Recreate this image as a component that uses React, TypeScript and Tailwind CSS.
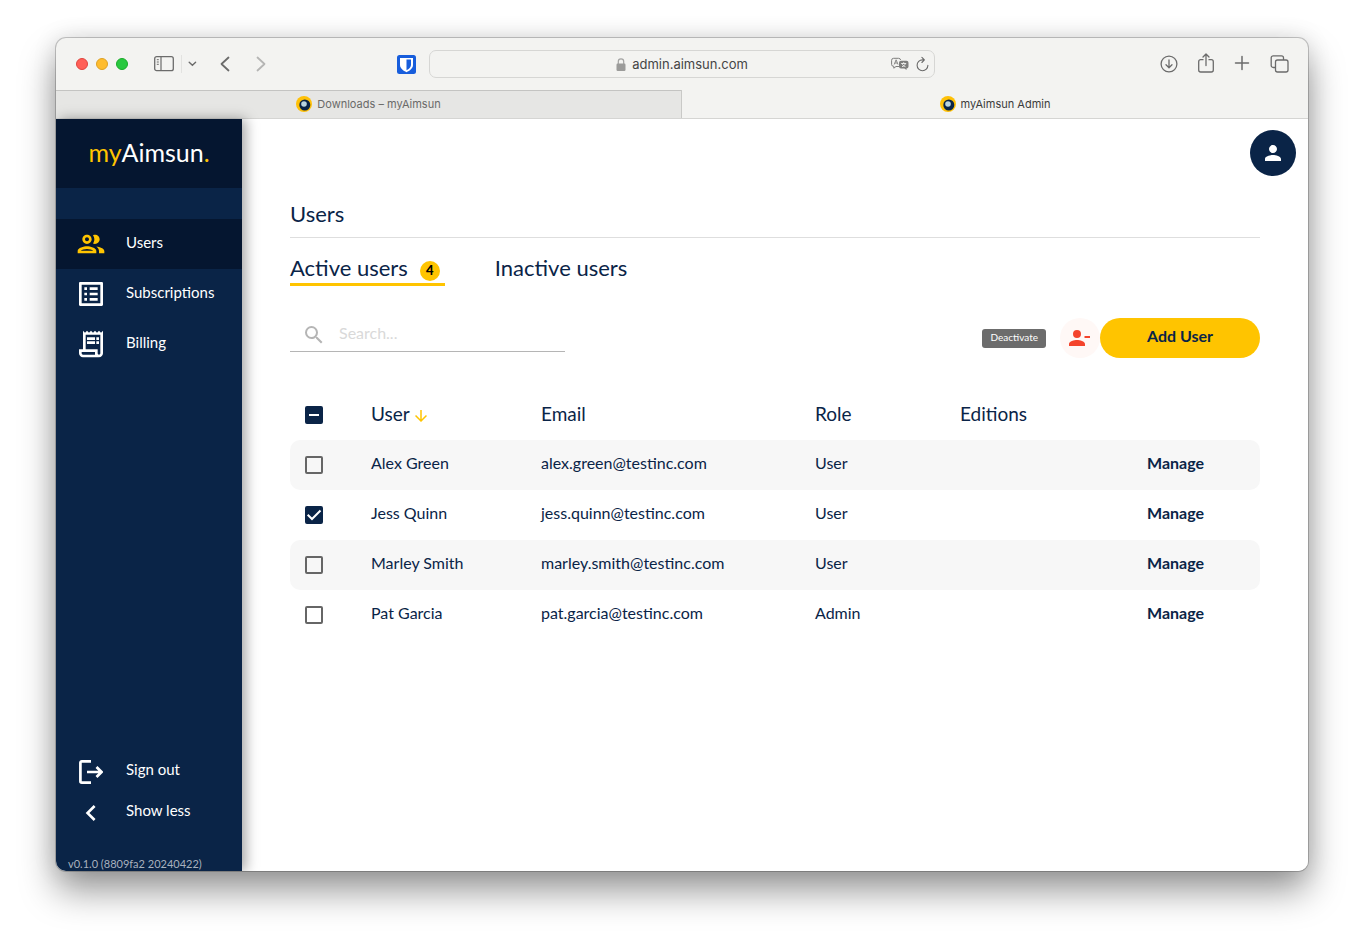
import { useEffect, useRef, useState } from 'react';
import {
  MdArrowDownward,
  MdChevronLeft,
  MdOutlineGroup,
  MdOutlineListAlt,
  MdOutlineReceiptLong,
  MdPerson,
  MdSearch
} from 'react-icons/md';

const navItems = [
  { icon: MdOutlineGroup, label: 'Users', active: true },
  { icon: MdOutlineListAlt, label: 'Subscriptions', active: false },
  { icon: MdOutlineReceiptLong, label: 'Billing', active: false }
];

const users = [
  { name: 'Alex Green', email: 'alex.green@testinc.com', role: 'User' },
  { name: 'Jess Quinn', email: 'jess.quinn@testinc.com', role: 'User' },
  { name: 'Marley Smith', email: 'marley.smith@testinc.com', role: 'User' },
  { name: 'Pat Garcia', email: 'pat.garcia@testinc.com', role: 'Admin' }
];

function Favicon() {
  return (
    <svg viewBox="0 0 16 16" className="size-4 shrink-0" aria-hidden="true">
      <circle cx="8" cy="8" r="8" fill="#ffc107" />
      <circle cx="8.8" cy="9" r="5.5" fill="#0a2447" />
      <circle cx="8" cy="8" r="2.800" fill="#b9d3de" />
    </svg>
  );
}

function Toolbar() {
  return (
    <div className="grid h-[52px] grid-cols-[1fr_506px_1fr] items-center text-[#6b6b6b]">
      <div className="flex items-center pr-[13px] pl-5">
        <div className="flex gap-2">
          <button aria-label="Close" className="size-3 rounded-full border border-[#e0443e] bg-[#ff5f57]" />
          <button aria-label="Minimize" className="size-3 rounded-full border border-[#dea123] bg-[#febc2e]" />
          <button aria-label="Zoom" className="size-3 rounded-full border border-[#1aab29] bg-[#28c840]" />
        </div>
        <button aria-label="Sidebar" className="ml-[26px]">
          <svg width="20" height="16" viewBox="0 0 20 16" fill="none" stroke="currentColor">
            <rect x="0.7" y="0.7" width="18.6" height="14" rx="2" strokeWidth="1.3" />
            <path d="M7 1v13.5" strokeWidth="1.2" />
            <path d="M2.8 3.7h2M2.8 6h2M2.8 8.300h2" strokeWidth="1" />
          </svg>
        </button>
        <span className="ml-[7px] h-[18px] w-px bg-[#e2e2e0]" />
        <button aria-label="Tab groups" className="ml-[6px]">
          <svg width="9" height="6" viewBox="0 0 9 6" fill="none" stroke="currentColor" strokeWidth="1.4" strokeLinecap="round">
            <path d="M1.200 1.200l3.200 3 3.200-3" />
          </svg>
        </button>
        <button aria-label="Back" className="ml-[23px]">
          <svg width="10" height="16" viewBox="0 0 10 16" fill="none" stroke="currentColor" strokeWidth="1.8" strokeLinecap="round" strokeLinejoin="round">
            <path d="M8.500 1.500L1.500 8l7 6.500" />
          </svg>
        </button>
        <button aria-label="Forward" className="ml-[26px] text-[#b5b5b4]">
          <svg width="10" height="16" viewBox="0 0 10 16" fill="none" stroke="currentColor" strokeWidth="1.8" strokeLinecap="round" strokeLinejoin="round">
            <path d="M1.500 1.500l7 6.500-7 6.500" />
          </svg>
        </button>
        <button aria-label="Bitwarden" className="ml-auto">
          <svg width="19" height="19" viewBox="0 0 19 19">
            <rect width="19" height="19" rx="2.500" fill="#175ddc" />
            <path d="M3 3h13v7c0 3.300-3.300 5.700-6.500 7.200C6.300 15.700 3 13.300 3 10z" fill="#fff" />
            <path d="M9.500 4.600H14V10c0 2.200-2 4-4.500 5.300z" fill="#175ddc" />
          </svg>
        </button>
      </div>

      <div className="flex h-7 items-center rounded-[7px] border border-[#d6d6d4] px-[5px]">
        <div className="w-[38px]" />
        <div className="flex flex-1 items-center justify-center gap-[6px]">
          <svg width="10" height="13" viewBox="0 0 10 13">
            <path d="M2.300 6V3.500a2.700 2.700 0 015.400 0V6" fill="none" stroke="#a3a3a2" strokeWidth="1.2" />
            <rect x="0.500" y="5.500" width="9" height="7.500" rx="1.200" fill="#9b9b9a" />
          </svg>
          <span className="text-[13px] leading-5 text-[#454545]">admin.aimsun.com</span>
        </div>
        <div className="flex w-[38px] items-center gap-[7px]">
          <button aria-label="Translate" className="text-[#7d7d7c]">
            <svg width="18" height="14" viewBox="0 0 18 14" fill="none" stroke="currentColor">
              <path d="M8 9.500H5l-2.200 1.700V9.300A2 2 0 01.6 7.400V3.300a2 2 0 012-2h5a2 2 0 012 1.700" strokeWidth="1" />
              <path d="M3.200 7.500l1.900-4.700L7 7.500M3.900 6h2.400" strokeWidth="0.9" />
              <path d="M10 3.800h5.500a2 2 0 012 2v3.700a2 2 0 01-2 2V13l-2.100-1.500H10a2 2 0 01-2-2V5.800a2 2 0 012-2z" fill="currentColor" stroke="none" />
              <path d="M10.200 6.500h5M12.700 5.200v1.300M11 9.700c2-.6 3-1.700 3.300-3.200M14.500 9.700c-2-.6-3-1.700-3.300-3.200" stroke="#f3f3f1" strokeWidth="0.900" />
            </svg>
          </button>
          <button aria-label="Reload">
            <svg width="13" height="16" viewBox="0 0 13 16" fill="none" stroke="currentColor" strokeWidth="1.1" strokeLinecap="round" strokeLinejoin="round">
              <path d="M11.900 9.300A5.400 5.400 0 116.500 3.900h1.700M5.900 1.300l2.500 2.600-2.500 2.600" />
            </svg>
          </button>
        </div>
      </div>

      <div className="flex items-center justify-end gap-5 pr-[19px]">
        <button aria-label="Downloads">
          <svg width="18" height="18" viewBox="0 0 18 18" fill="none" stroke="currentColor" strokeWidth="1.3" strokeLinecap="round" strokeLinejoin="round">
            <circle cx="9" cy="9" r="7.900" />
            <path d="M9 5v7.500M6 9.700l3 3 3-3" />
          </svg>
        </button>
        <button aria-label="Share" className="pb-[2px]">
          <svg width="16" height="20" viewBox="0 0 16 20" fill="none" stroke="currentColor" strokeWidth="1.3" strokeLinecap="round" strokeLinejoin="round">
            <path d="M5 6.700H2.700a2 2 0 00-2 2V17a2 2 0 002 2h10.600a2 2 0 002-2V8.700a2 2 0 00-2-2H11" />
            <path d="M8 12.500V1.200M5 4l3-3 3 3" />
          </svg>
        </button>
        <button aria-label="New tab" className="pb-[2px]">
          <svg width="16" height="16" viewBox="0 0 16 16" fill="none" stroke="currentColor" strokeWidth="1.500" strokeLinecap="round">
            <path d="M8 1.500v13M1.500 8h13" />
          </svg>
        </button>
        <button aria-label="Tab overview">
          <svg width="19" height="18" viewBox="0 0 19 18" fill="none" stroke="currentColor" strokeWidth="1.300">
            <rect x="5.500" y="5" width="12.500" height="12" rx="2" />
            <path d="M5.500 12.500H3.200a2 2 0 01-2-2V2.800a2 2 0 012-2h8.300a2 2 0 012 2V5" />
          </svg>
        </button>
      </div>
    </div>
  );
}

function BrowserTabs() {
  return (
    <div className="grid h-[29px] grid-cols-2 border-b border-[#d5d5d3] text-[11px] leading-4">
      <button className="flex items-center justify-center gap-[5px] border-r border-[#c9c9c7] bg-[#e6e6e4] text-[#6a6a69] shadow-[inset_0_1px_0_#c4c4c2]">
        <Favicon />
        Downloads – myAimsun
      </button>
      <button className="flex items-center justify-center gap-[5px] text-[#3b3b3b]">
        <Favicon />
        myAimsun Admin
      </button>
    </div>
  );
}

function SignOutIcon() {
  return (
    <svg width="24" height="24" viewBox="0 0 24 24" fill="none" stroke="currentColor" strokeWidth="2.700">
      <path d="M12 1.400H2.800A1.400 1.400 0 001.400 2.800v18.400a1.400 1.400 0 001.400 1.400H12" />
      <path d="M8 12h14.500M17.500 7l5 5-5 5" />
    </svg>
  );
}

function Sidebar() {
  return (
    <aside className="z-10 flex w-[186px] shrink-0 flex-col bg-[#0a2447] text-[15px] text-white shadow-[4px_0_12px_rgba(0,0,0,0.35)]">
      <div className="flex h-[69px] items-center justify-center bg-[#051630] pb-[2px] text-[25px]">
        <span className="text-[#ffc400]">my</span>Aimsun<span className="text-[#ffc400]">.</span>
      </div>
      <nav className="mt-[31px]">
        {navItems.map((item) => (
          <a
            key={item.label}
            href="#"
            className={`flex h-[50px] items-center pl-[19px] ${item.active ? 'bg-[#051630]' : ''}`}
          >
            <item.icon className={`size-8 ${item.active ? 'text-[#ffc400]' : ''}`} />
            <span className="ml-[19px] pb-1">{item.label}</span>
          </a>
        ))}
      </nav>
      <div className="mt-auto">
        <button className="flex h-[41px] w-full items-center">
          <span className="flex w-[70px] justify-center">
            <SignOutIcon />
          </span>
          <span className="pb-1">Sign out</span>
        </button>
        <button className="flex h-[41px] w-full items-center">
          <span className="flex w-[70px] justify-center">
            <MdChevronLeft className="size-8" />
          </span>
          <span className="pb-1">Show less</span>
        </button>
        <p className="mt-6 pl-3 text-[11px] leading-[14px] text-[#a8b1be]">v0.1.0 (8809fa2 20240422)</p>
      </div>
    </aside>
  );
}

type CheckboxProps = {
  label: string;
  checked: boolean;
  indeterminate?: boolean;
  onChange: () => void;
};

function Checkbox({ label, checked, indeterminate = false, onChange }: CheckboxProps) {
  const ref = useRef<HTMLInputElement>(null);

  useEffect(() => {
    if (ref.current) ref.current.indeterminate = indeterminate;
  }, [indeterminate]);

  return (
    <label className="grid w-[18px] *:col-start-1 *:row-start-1">
      <input
        ref={ref}
        type="checkbox"
        aria-label={label}
        checked={checked}
        onChange={onChange}
        className="size-[18px] appearance-none rounded-[2px] border-2 border-[#666] checked:border-[#0a2447] checked:bg-[#0a2447] indeterminate:border-[#0a2447] indeterminate:bg-[#0a2447]"
      />
      <svg viewBox="0 0 18 18" className="pointer-events-none size-[18px]" fill="none" stroke="#fff" strokeWidth="2">
        {indeterminate && <path d="M4 9h10" />}
        {checked && !indeterminate && <path d="M2.700 8.700l4.300 4.300 8.500-8.500" />}
      </svg>
    </label>
  );
}

function UsersTable() {
  const [selected, setSelected] = useState(['Jess Quinn']);
  const all = selected.length === users.length;

  const toggle = (name: string) =>
    setSelected((prev) => (prev.includes(name) ? prev.filter((n) => n !== name) : [...prev, name]));

  return (
    <table className="mt-8 w-full table-fixed text-left">
      <thead>
        <tr className="h-[50px] text-[19px] *:font-normal">
          <th className="w-[81px] pl-[15px]">
            <Checkbox
              label="Select all users"
              checked={all}
              indeterminate={selected.length > 0 && !all}
              onChange={() => setSelected(all ? [] : users.map((u) => u.name))}
            />
          </th>
          <th className="w-[170px] pb-[2px]">
            <button className="flex items-center gap-[2px]">
              User
              <MdArrowDownward className="mt-1 size-[18px] text-[#ffc400]" />
            </button>
          </th>
          <th className="w-[274px] pb-[2px]">Email</th>
          <th className="w-[145px] pb-[2px]">Role</th>
          <th className="w-[187px] pb-[2px]">Editions</th>
          <th aria-label="Actions" />
        </tr>
      </thead>
      <tbody>
        {users.map((user) => (
          <tr key={user.name} className="h-[50px] odd:bg-[#f7f7f7]">
            <td className="rounded-l-[10px] pl-[15px]">
              <Checkbox
                label={`Select ${user.name}`}
                checked={selected.includes(user.name)}
                onChange={() => toggle(user.name)}
              />
            </td>
            <td className="pb-1">{user.name}</td>
            <td className="pb-1">{user.email}</td>
            <td className="pb-1">{user.role}</td>
            <td />
            <td className="rounded-r-[10px] pb-1">
              <button className="font-bold">Manage</button>
            </td>
          </tr>
        ))}
      </tbody>
    </table>
  );
}

export default function App() {
  return (
    <div className="flex min-h-screen flex-col bg-white px-14 pt-[38px] pb-[74px] font-['Inter',sans-serif]">
      <div className="flex flex-1 flex-col overflow-hidden rounded-[10px] bg-[#f3f3f1] shadow-[0_0_0_1px_rgba(0,0,0,0.2),0_20px_36px_rgba(0,0,0,0.4),0_0_24px_rgba(0,0,0,0.12)]">
        <Toolbar />
        <BrowserTabs />
        <div className="flex flex-1 bg-white font-['Lato',sans-serif] text-[#0a2447]">
          <Sidebar />
          <main className="min-w-0 flex-1">
            <div className="flex justify-end pt-[11px] pr-3">
              <button aria-label="Account" className="grid size-[46px] place-items-center rounded-full bg-[#0a2447] text-white">
                <MdPerson className="size-6" />
              </button>
            </div>

            <div className="px-12">
              <h1 className="mt-6 border-b border-[#dedede] pb-[9px] text-[22px] leading-7">Users</h1>

              <div className="mt-4 flex gap-[50px] text-[22px] leading-7">
                <button className="flex h-8 items-start gap-3 border-b-3 border-[#ffc400] pr-[5px]">
                  Active users
                  <span className="mt-[7px] grid size-5 place-items-center rounded-full bg-[#ffc400] pb-[2px] text-[13px] leading-[18px] font-black text-black">
                    4
                  </span>
                </button>
                <button className="flex h-8 items-start">Inactive users</button>
              </div>

              <div className="mt-8 flex items-start justify-between">
                <label className="flex h-[34px] w-[275px] items-center gap-[13px] border-b border-[#b5b5b5] pl-3">
                  <MdSearch className="size-6 shrink-0 text-[#b5b5b5]" />
                  <input
                    type="text"
                    aria-label="Search users"
                    placeholder="Search..."
                    className="w-full pb-1 outline-none placeholder:text-[#d9d9d9]"
                  />
                </label>
                <div className="flex items-center">
                  <span role="tooltip" className="mr-[14px] rounded-[3px] bg-[#6c6c6c] px-2 pb-[2px] text-[10px] leading-[17px] text-white">
                    Deactivate
                  </span>
                  <button aria-label="Deactivate" className="grid size-10 place-items-center rounded-full bg-[#fff8f6]">
                    <svg width="26" height="24" viewBox="0 0 26 24" fill="#f4442c">
                      <path d="M10 12a4 4 0 100-8 4 4 0 000 8zm0 2c-2.670 0-8 1.340-8 4v2h16v-2c0-2.660-5.330-4-8-4z" />
                      <path d="M17.500 10H23v2h-5.500z" />
                    </svg>
                  </button>
                  <button className="h-10 w-40 rounded-full bg-[#ffc400] pb-1 font-bold">Add User</button>
                </div>
              </div>

              <UsersTable />
            </div>
          </main>
        </div>
      </div>
    </div>
  );
}
